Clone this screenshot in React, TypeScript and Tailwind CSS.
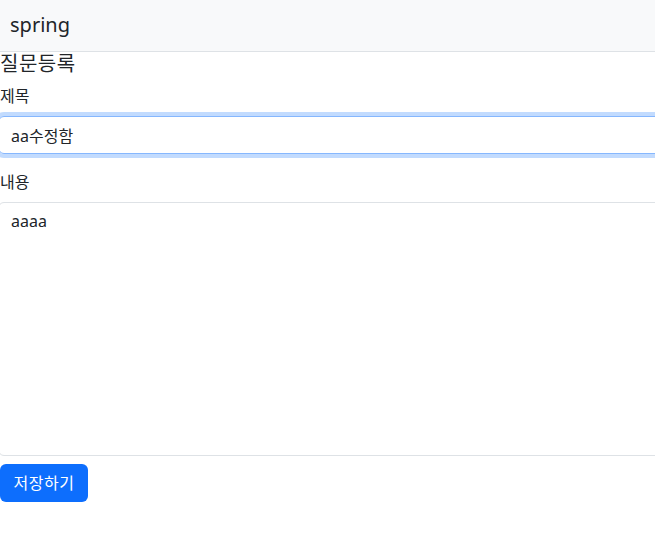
import React from 'react';

const font = { fontFamily: '"Noto Sans", "Noto Sans CJK KR", sans-serif' };

export default function App() {
  return (
    <div className="min-h-[533px] overflow-hidden bg-white text-[#212529]" style={font}>
      <nav className="h-[52px] bg-[#f8f9fa] border-b border-[#dee2e6] flex items-center px-[10px]">
        <span className="text-[20px] leading-[30px] -mt-[2px]">spring</span>
      </nav>
      <div>
        <h5 className="text-[20px] leading-[24px] mb-2 tracking-[0.5px]">질문등록</h5>
        <form>
          <div className="mb-4">
            <label className="block text-[16px] leading-[24px] mb-2">제목</label>
            <input
              type="text"
              defaultValue="aa수정함"
              className="block -ml-[2px] w-[calc(100%+20px)] h-[38px] px-3 py-1.5 text-[16px] leading-[24px] rounded-md border border-[#86b7fe] outline-none shadow-[0_0_0_4px_rgba(13,110,253,0.25)]"
              style={font}
            />
          </div>
          <div className="mb-2">
            <label className="block text-[16px] leading-[24px] mb-2">내용</label>
            <textarea
              rows={10}
              defaultValue="aaaa"
              className="block -ml-[2px] w-[calc(100%+20px)] h-[254px] px-3 py-1.5 text-[16px] leading-[24px] rounded-md border border-[#dee2e6] outline-none resize-none"
              style={font}
            />
          </div>
          <button
            type="button"
            className="w-[88px] h-[38px] text-[16px] leading-[24px] text-white bg-[#0d6efd] rounded-md tracking-[0.5px]"
          >
            저장하기
          </button>
        </form>
      </div>
    </div>
  );
}
